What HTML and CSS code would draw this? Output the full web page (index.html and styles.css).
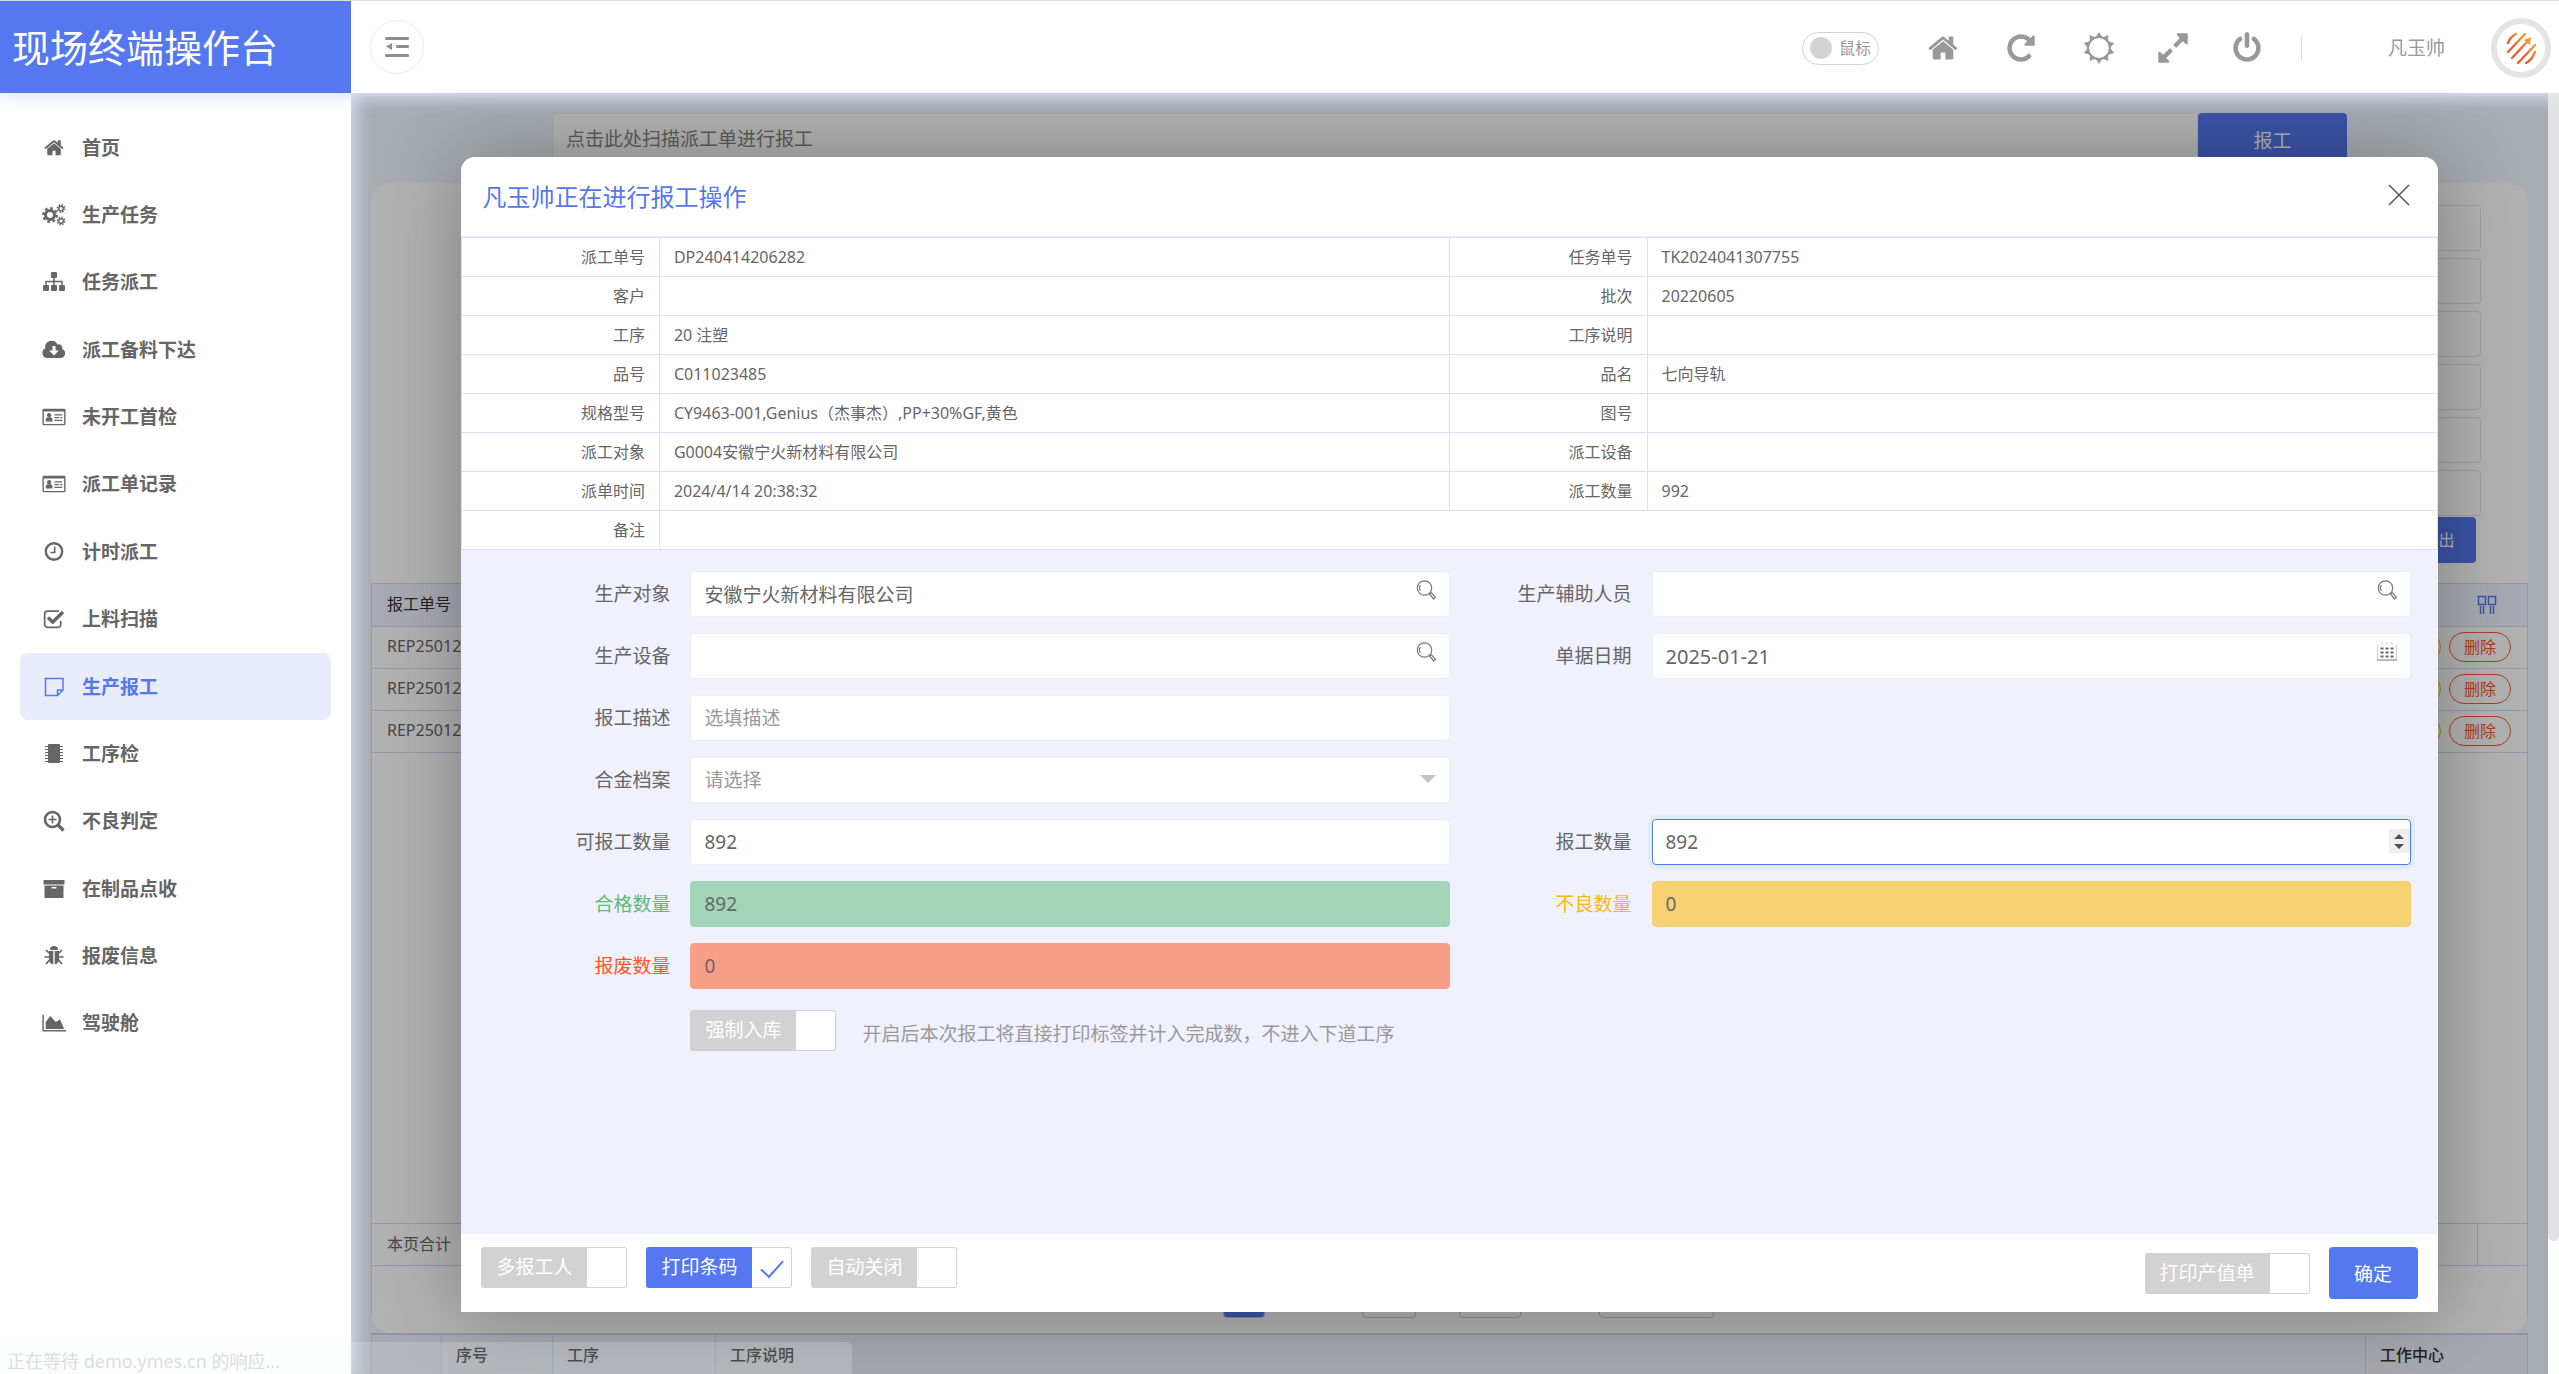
FILE: index.html
```html
<!DOCTYPE html>
<html lang="zh-CN">
<head>
<meta charset="utf-8">
<title>现场终端操作台</title>
<link rel="stylesheet" href="styles.css">
</head>
<body>
<div class="app">
  <header class="topbar">
    <h1 class="brand">现场终端操作台</h1>
    <button class="fold" type="button" aria-label="折叠菜单">
      <svg width="24" height="22" viewBox="0 0 24 22" fill="#8f8f8f"><rect x="0" y="1" width="24" height="3" rx="1"/><rect x="11" y="9" width="13" height="3" rx="1"/><rect x="0" y="18" width="24" height="3" rx="1"/><path d="M1 10.500 7 7v7z"/></svg>
    </button>
    <div class="tools">
      <button class="mouse" type="button"><i></i>鼠标</button>
      <a class="tool wide" href="#" aria-label="首页"><svg viewBox="0 0 1792 1792"><path d="M1472 992v480q0 26-19 45t-45 19h-384v-384h-256v384h-384q-26 0-45-19t-19-45v-480q0-1 .5-3t.5-3l575-474 575 474q1 2 1 6zm223-69l-62 74q-8 9-21 11h-3q-13 0-21-7l-692-577-692 577q-12 8-24 7-13-2-21-11l-62-74q-8-10-7-23.500t11-21.500l719-599q32-26 76-26t76 26l244 204v-195q0-14 9-23t23-9h192q14 0 23 9t9 23v408l219 182q10 8 11 21.500t-7 23.500z"/></svg></a>
      <a class="tool wide" href="#" aria-label="刷新"><svg viewBox="0 0 1792 1792"><path d="M1664 256v448q0 26-19 45t-45 19h-448q-42 0-59-40-17-39 14-69l138-138q-148-137-349-137-104 0-198.500 40.500t-163.500 109.500-109.500 163.500-40.500 198.500 40.500 198.500 109.500 163.500 163.500 109.500 198.500 40.500q119 0 225-52t179-147q7-10 23-12 15 0 25 9l137 138q9 8 9.500 20.500t-7.500 22.500q-109 132-264 204.500t-327 72.500q-156 0-298-61t-245-164-164-245-61-298 61-298 164-245 245-164 298-61q147 0 284.500 55.500t244.500 156.500l130-129q29-31 70-14 39 17 39 59z"/></svg></a>
      <a class="tool" href="#" aria-label="主题"><svg viewBox="0 0 32 32"><circle cx="16" cy="16" r="11" fill="none" stroke="#999" stroke-width="2"/><g id="rays"><path id="ray" d="M16 0l3.800 6h-7.600z"/><use href="#ray" transform="rotate(36 16 16)"/><use href="#ray" transform="rotate(72 16 16)"/><use href="#ray" transform="rotate(108 16 16)"/><use href="#ray" transform="rotate(144 16 16)"/></g><use href="#rays" transform="rotate(180 16 16)"/></svg></a>
      <a class="tool" href="#" aria-label="全屏"><svg viewBox="64 64 1664 1664"><path d="M883 1056q0 13-10 23l-332 332 144 144q19 19 19 45t-19 45-45 19h-448q-26 0-45-19t-19-45v-448q0-26 19-45t45-19 45 19l144 144 332-332q10-10 23-10t23 10l114 114q10 10 10 23zm781-864v448q0 26-19 45t-45 19-45-19l-144-144-332 332q-10 10-23 10t-23-10l-114-114q-10-10-10-23t10-23l332-332-144-144q-19-19-19-45t19-45 45-19h448q26 0 45 19t19 45z"/></svg></a>
      <a class="tool" href="#" aria-label="退出"><svg viewBox="0 0 1792 1792"><path d="M1664 896q0 156-61 298t-164 245-245 164-298 61-298-61-245-164-164-245-61-298q0-182 80.500-343t226.500-270q43-32 95.500-25t83.500 50q32 42 24.500 94.500t-49.500 84.500q-98 74-151.500 181t-53.500 228q0 104 40.500 198.500t109.500 163.500 163.500 109.500 198.500 40.500 198.500-40.500 163.500-109.500 109.500-163.500 40.500-198.500q0-121-53.500-228t-151.500-181q-42-32-49.500-84.500t24.500-94.500q31-43 84-50t95 25q146 109 226.500 270t80.500 343zm-640-768v640q0 52-38 90t-90 38-90-38-38-90v-640q0-52 38-90t90-38 90 38 38 90z"/></svg></a>
      <span class="rule"></span>
      <span class="user">凡玉帅</span>
      <span class="avatar">
        <svg width="30" height="32" viewBox="0 0 30 32" fill="none" stroke-width="2.400" stroke-linecap="round"><defs><linearGradient id="og" gradientUnits="userSpaceOnUse" x1="6" y1="22" x2="20" y2="8"><stop offset=".35" stop-color="#f25a33"/><stop offset="1" stop-color="#f0982f"/></linearGradient></defs><g stroke="url(#og)"><path d="M2 11Q4 5 10 2M2 20 19 2M6 26 22 9M12 31 29 13M20 31Q26 28 29 20"/></g><path d="M18 8 25 5 24 13z" fill="#f0982f"/></svg>
      </span>
    </div>
  </header>

  <nav class="side">
    <div class="menu">
    <a href="#"><svg viewBox="-128 -100 2048 2048"><path d="M1472 992v480q0 26-19 45t-45 19h-384v-384h-256v384h-384q-26 0-45-19t-19-45v-480q0-1 .5-3t.5-3l575-474 575 474q1 2 1 6zm223-69l-62 74q-8 9-21 11h-3q-13 0-21-7l-692-577-692 577q-12 8-24 7-13-2-21-11l-62-74q-8-10-7-23.500t11-21.500l719-599q32-26 76-26t76 26l244 204v-195q0-14 9-23t23-9h192q14 0 23 9t9 23v408l219 182q10 8 11 21.500t-7 23.500z"/></svg>首页</a>
    <a href="#"><svg viewBox="0 0 24 24" fill="none" stroke="currentColor"><circle cx="8" cy="12" r="4.500" stroke-width="3"/><circle cx="8" cy="12" r="6.800" stroke-width="2.400" stroke-dasharray="2.700 2.640"/><circle cx="19" cy="5.500" r="2.300" stroke-width="1.400"/><circle cx="19" cy="5.500" r="3.600" stroke-width="1.600" stroke-dasharray="1.410 1.410"/><circle cx="19" cy="18" r="2.300" stroke-width="1.400"/><circle cx="19" cy="18" r="3.600" stroke-width="1.600" stroke-dasharray="1.410 1.410"/></svg>生产任务</a>
    <a href="#"><svg viewBox="0 0 24 24"><rect x="9" y="2" width="6" height="6" rx="1"/><rect x="1" y="15" width="6" height="6" rx="1"/><rect x="9" y="15" width="6" height="6" rx="1"/><rect x="17" y="15" width="6" height="6" rx="1"/><path d="M4 15v-3.500h16V15M12 8v7" fill="none" stroke="currentColor" stroke-width="1.500"/></svg>任务派工</a>
    <a href="#"><svg viewBox="0 0 24 24"><path fill-rule="evenodd" d="M5.500 20a5.200 5.200 0 0 1-2.300-9.800A6.500 6.500 0 0 1 15.500 6.500a3.600 3.600 0 0 1 4.700 4.500A4.700 4.700 0 0 1 19 20zM10.500 8v4.500H7.200L12 17.500l4.800-5h-3.300V8z"/></svg>派工备料下达</a>
    <a href="#"><svg viewBox="0 0 26 24"><g id="idcard"><path fill-rule="evenodd" d="M2 3h22a1.500 1.500 0 0 1 1.500 1.500v15A1.500 1.500 0 0 1 24 21H2a1.500 1.500 0 0 1-1.500-1.500v-15A1.500 1.500 0 0 1 2 3zM2 6v13.500h22V6z"/><circle cx="7.700" cy="10" r="2.300"/><path d="M4 17v-2.200q.4-2.600 2.200-2.600h3q1.800 0 2.200 2.600V17z"/><path d="M13.500 9h8.500v1.400h-8.500zM13.500 12h5v1.400h-5zM19.800 12h2.200v1.400h-2.200zM13.500 15h8.500v1.400h-8.500z"/></g></svg>未开工首检</a>
    <a href="#"><svg viewBox="0 0 26 24"><use href="#idcard"/></svg>派工单记录</a>
    <a href="#"><svg viewBox="0 0 24 24" fill="none" stroke="currentColor"><circle cx="12" cy="11.500" r="8.200" stroke-width="2.400"/><path d="M12.700 6.500v6H8.500" stroke-width="1.600"/></svg>计时派工</a>
    <a href="#"><svg viewBox="0 0 24 24" fill="none" stroke="currentColor"><path d="M17 4.200H5.500A3 3 0 0 0 2.700 7v10.500a3 3 0 0 0 2.800 2.800H16a3 3 0 0 0 2.800-2.800V14" stroke-width="1.700"/><path d="M6 10.500l4.700 4.700L21 5" stroke-width="3.400"/></svg>上料扫描</a>
    <a href="#" class="on"><svg viewBox="0 0 24 24" fill="none" stroke="currentColor" stroke-width="1.500"><path d="M3.500 3.500h17.500V15l-5.500 5.500h-12zM20.500 15h-5v5"/></svg>生产报工</a>
    <a href="#"><svg viewBox="0 0 24 24"><rect x="6" y="2" width="12" height="19" rx="1"/><path d="M4.500 4v16M19.500 4v16" fill="none" stroke="currentColor" stroke-width="3" stroke-dasharray="1 2"/></svg>工序检</a>
    <a href="#"><svg viewBox="0 0 24 24" fill="none" stroke="currentColor"><circle cx="10.500" cy="10.500" r="7.500" stroke-width="2.600"/><path d="M16 16l5.500 5.500" stroke-width="3.200"/><path d="M6.500 10.500h8M10.500 6.500v8" stroke-width="1.700"/></svg>不良判定</a>
    <a href="#"><svg viewBox="0 0 24 24"><path fill-rule="evenodd" d="M1.500 3h21v4.500h-21zM2.500 8.500h19V21h-19zM9.500 10v1.500h5V10z"/></svg>在制品点收</a>
    <a href="#"><svg viewBox="0 0 24 24"><path d="M8 6a4 4 0 0 1 8 0zM7 7h4.300v13.500Q7 19.500 7 15zM12.700 7H17v8q0 4.500-4.300 5.500z"/><path d="M7 9 4 6M17 9l3-3M7 13H2.500M17 13h4.500M7.500 16 4 20M16.500 16l3.500 4" fill="none" stroke="currentColor" stroke-width="1.700"/></svg>报废信息</a>
    <a href="#"><svg viewBox="0 0 26 24"><path d="M1.200 3v17.300H26" fill="none" stroke="currentColor" stroke-width="1.600"/><path d="M4 18.500V11l5-6.500 6 6.500 4.500-3 4.500 10.500z"/></svg>驾驶舱</a>
    </div>
  </nav>

  <main class="content">
    <div class="page">
      <div class="scan">
        <input type="text" placeholder="点击此处扫描派工单进行报工" aria-label="扫描派工单">
        <button type="button">报工</button>
      </div>
      <section class="card">
        <div class="filters">
          <input type="text" aria-label="条件一"><input type="text" aria-label="条件二"><input type="text" aria-label="条件三"><input type="text" aria-label="条件四"><input type="text" aria-label="条件五"><input type="text" aria-label="条件六">
          <button type="button">导出</button>
        </div>
        <div class="list">
          <table class="records">
            <thead><tr><th>报工单号</th><th class="ops"><svg width="20" height="20" viewBox="0 0 20 20" fill="none" stroke="#5578f0" stroke-width="1.500"><path d="M1.500 1.500h7v8h-7zM11.500 1.500h7v8h-7zM3.500 11v8M6.500 11v8M13.500 11v8M16.500 11v8"/></svg></th></tr></thead>
            <tbody>
              <tr><td>REP25012</td><td class="acts"><button class="warn" type="button"></button><button class="del" type="button">删除</button></td></tr>
              <tr><td>REP25012</td><td class="acts"><button class="warn" type="button"></button><button class="del" type="button">删除</button></td></tr>
              <tr><td>REP25012</td><td class="acts"><button class="warn" type="button"></button><button class="del" type="button">删除</button></td></tr>
            </tbody>
          </table>
          <div class="total"><span>本页合计</span><span class="last"></span></div>
          <div class="pager"><i class="cur"></i><i class="go"></i><i class="sure"></i><i class="size"></i></div>
        </div>
      </section>
      <table class="steps">
        <tr><th class="c1"></th><th class="c2">序号</th><th class="c3">工序</th><th>工序说明</th><th class="c5">工作中心</th></tr>
      </table>
    </div>
    <div class="mask"></div>
    <div class="rail"><i></i></div>

    <section class="dialog" role="dialog" aria-labelledby="dlg-title">
      <header class="dlg-head">
        <h2 id="dlg-title">凡玉帅正在进行报工操作</h2>
        <button type="button" aria-label="关闭"><svg width="22" height="22" viewBox="0 0 22 22" stroke="#555" stroke-width="1.500"><path d="M1 1l20 20M21 1 1 21"/></svg></button>
      </header>
      <table class="info">
        <tr><th>派工单号</th><td>DP240414206282</td><th>任务单号</th><td>TK2024041307755</td></tr>
        <tr><th>客户</th><td></td><th>批次</th><td>20220605</td></tr>
        <tr><th>工序</th><td>20 注塑</td><th>工序说明</th><td></td></tr>
        <tr><th>品号</th><td>C011023485</td><th>品名</th><td>七向导轨</td></tr>
        <tr><th>规格型号</th><td>CY9463-001,Genius（杰事杰）,PP+30%GF,黄色</td><th>图号</th><td></td></tr>
        <tr><th>派工对象</th><td>G0004安徽宁火新材料有限公司</td><th>派工设备</th><td></td></tr>
        <tr><th>派单时间</th><td>2024/4/14 20:38:32</td><th>派工数量</th><td>992</td></tr>
        <tr><th>备注</th><td colspan="3"></td></tr>
      </table>
      <form class="form">
        <div class="field first"><label for="f1">生产对象</label><div class="box"><input id="f1" type="text" value="安徽宁火新材料有限公司"><svg class="ico" width="20" height="20" viewBox="0 0 20 20"><g id="lens" fill="none" stroke="#777" stroke-width="1.200"><circle cx="8.500" cy="8" r="7.200"/><path d="M4.500 11a5 5 0 0 1 0-6"/><path d="M13.500 14l1.800-1.400 4 4.800-1.600 1.600z"/></g></svg></div></div>
        <div class="field"><label for="f2">生产辅助人员</label><div class="box"><input id="f2" type="text"><svg class="ico" width="20" height="20" viewBox="0 0 20 20"><use href="#lens"/></svg></div></div>
        <div class="field first"><label for="f3">生产设备</label><div class="box"><input id="f3" type="text"><svg class="ico" width="20" height="20" viewBox="0 0 20 20"><use href="#lens"/></svg></div></div>
        <div class="field"><label for="f4">单据日期</label><div class="box"><input id="f4" class="date" type="text" value="2025-01-21"><svg class="ico" width="20" height="20" viewBox="0 0 20 20"><path d="M.5 2.500v15.500h19V2.500M5 0v3M10 0v3M15 0v3" fill="none" stroke="#ccc"/><path d="M0 18h20" stroke="#aaa" stroke-width="1.500"/><path d="M3.500 6.500h13M3.500 10.500h13M3.500 14.500h13" stroke="#666" stroke-width="2" stroke-dasharray="3 2"/></svg></div></div>
        <div class="field first"><label for="f5">报工描述</label><div class="box"><input id="f5" type="text" placeholder="选填描述"></div></div>
        <div class="field first"><label for="f6">合金档案</label><div class="box"><select id="f6"><option>请选择</option></select><i class="caret"></i></div></div>
        <div class="field first"><label for="f7">可报工数量</label><div class="box"><input id="f7" type="text" value="892"></div></div>
        <div class="field"><label for="f8">报工数量</label><div class="box"><input id="f8" class="focus" type="number" value="892"><span class="spin"><i class="up"></i><i class="down"></i></span></div></div>
        <div class="field first ok"><label for="f9">合格数量</label><div class="box"><input id="f9" type="text" value="892"></div></div>
        <div class="field bad"><label for="f10">不良数量</label><div class="box"><input id="f10" type="text" value="0"></div></div>
        <div class="field first scrap"><label for="f11">报废数量</label><div class="box"><input id="f11" type="text" value="0"></div></div>
        <div class="force"><label class="switch"><span>强制入库</span><input type="checkbox"></label><span class="hint">开启后本次报工将直接打印标签并计入完成数，不进入下道工序</span></div>
      </form>
      <footer class="dlg-foot">
        <label class="switch"><span>多报工人</span><input type="checkbox"></label>
        <label class="switch"><span>打印条码</span><input type="checkbox" checked></label>
        <label class="switch"><span>自动关闭</span><input type="checkbox"></label>
        <div class="foot-end">
          <label class="switch"><span>打印产值单</span><input type="checkbox"></label>
          <button type="button">确定</button>
        </div>
      </footer>
    </section>
  </main>
  <div class="status">正在等待 demo.ymes.cn 的响应...</div>
</div>
</body>
</html>
```
FILE: styles.css
```css
* { box-sizing: border-box; }
body {
  margin: 0;
  font: 19px/28px "Noto Sans", "Noto Sans CJK SC", sans-serif;
  color: #666;
}
button, input, select { font: inherit; color: inherit; margin: 0; }
button { padding: 0; border: 0; background: none; }
a { color: inherit; text-decoration: none; }
svg { display: block; }
input, select { outline: 0; }

.app {
  height: 100vh;
  display: grid;
  grid-template: 93px minmax(0, 1fr) / 351px minmax(0, 1fr);
  overflow: hidden;
}

/* top bar */
.topbar {
  grid-column: 1 / 3;
  display: flex;
  align-items: center;
  background: #fff;
  border-top: 1px solid #dcdde2;
  box-shadow: 0 2px 16px 2px #e0e6fa;
  z-index: 3;
}
.brand {
  width: 351px;
  height: 92px;
  margin: 0;
  padding-left: 12px;
  background: #5578f0;
  color: #fff;
  font-size: 38px;
  font-weight: 400;
  line-height: 92px;
}
.fold {
  display: grid;
  place-items: center;
  width: 54px;
  height: 54px;
  margin-left: 19px;
  border: 1px solid #eceef8;
  border-radius: 50%;
}
.tools {
  display: flex;
  align-items: center;
  margin-left: auto;
  padding: 2px 8px 0 0;
  color: #999;
}
.mouse {
  display: flex;
  align-items: center;
  gap: 7px;
  width: 77px;
  height: 33px;
  margin-right: 48px;
  padding-left: 7px;
  border: 1px solid #d2d2d2;
  border-radius: 17px;
  background: #fff;
  font-size: 16px;
}
.mouse i { width: 22px; height: 22px; border-radius: 50%; background: #d2d2d2; }
.tool { width: 32px; margin-right: 42px; fill: #999; }
.tool.wide { margin-right: 46px; }
.rule { width: 1px; height: 27px; background: #ddd; margin-left: -4px; }
.user { margin: 0 46px 0 86px; }
.avatar {
  display: grid;
  place-items: center;
  width: 60px;
  height: 60px;
  border: 6px solid #e4e4e4;
  border-radius: 50%;
}

/* side menu */
.side {
  padding: 21px 20px 0;
  background: #fff;
  box-shadow: 0 0 18px 3px #e0e6fa;
  font-weight: 700;
  z-index: 2;
}
.menu { display: grid; grid-auto-rows: 1fr; height: 943px; }
.menu a {
  display: flex;
  align-items: center;
  gap: 16px;
  padding-left: 22px;
  border-radius: 8px;
  fill: currentColor;
}
.menu svg { width: 24px; height: 24px; }
.menu .on { background: #e8ecfb; color: #5578f0; }

/* page behind the dialog */
.content { position: relative; overflow: hidden; background: #f0f5ff; }
.page {
  display: flex;
  flex-direction: column;
  height: 100%;
  margin-right: 11px;
  padding: 20px 20px 0;
}
.scan { display: flex; height: 56px; margin: 0 181px 14px; }
.scan input {
  flex: 1;
  padding: 0 13px 4px;
  border: 1px solid #eee;
  border-radius: 4px 0 0 4px;
  background: #fff;
}
.scan input::placeholder { color: #858585; }
.scan button { width: 149px; border-radius: 4px; background: #5578f0; color: #fff; }
.card {
  flex: 1;
  display: flex;
  flex-direction: column;
  min-height: 0;
  border-radius: 20px;
  background: #fff;
  overflow: hidden;
}
.filters {
  display: flex;
  flex-direction: column;
  align-items: flex-end;
  gap: 7px;
  height: 400px;
  padding: 22px 47px 0;
}
.filters input { width: 400px; height: 46px; border: 1px solid #e6e6e6; border-radius: 4px; flex: none; }
.filters button {
  width: 75px;
  height: 46px;
  flex: none;
  margin: -6px 5px 0 0;
  border-radius: 4px;
  background: #5578f0;
  color: #fff;
  font-size: 16px;
}
.list {
  flex: 1;
  display: flex;
  flex-direction: column;
  border: 1px solid #d3daf5;
  border-width: 1px 1px 0;
  font-size: 16px;
}
.records, .steps { width: 100%; border-collapse: collapse; table-layout: fixed; font-size: 16px; line-height: 24px; }
.records th, .records td { height: 42px; padding: 0 15px 2px; text-align: left; font-weight: 400; border-bottom: 1px solid #d3daf5; }
.records th { background: #f0f4ff; color: #333; font-weight: 400; }
.records .ops { padding: 0 30px; }
.ops svg { margin-left: auto; }
.records .acts { padding: 0 16px; text-align: right; font-size: 0; }
.acts button { height: 30px; width: 62px; margin-left: 8px; border: 1px solid #ffb800; border-radius: 15px; font-size: 16px; line-height: 26px; vertical-align: middle; }
.acts .del { border-color: #ff5722; color: #ff5722; }
.total {
  display: flex;
  justify-content: space-between;
  height: 43px;
  margin-top: auto;
  padding-left: 15px;
  border: 1px solid #d3daf5;
  border-width: 1px 0;
  line-height: 41px;
}
.total .last { width: 50px; border-left: 1px solid #d3daf5; }
.pager { display: flex; justify-content: center; height: 67px; padding: 14px 0 0 38px; }
.pager i { height: 38px; border: 1px solid #c4c9dc; border-radius: 4px; }
.pager .cur { width: 42px; margin-right: 97px; background: #5578f0; }
.pager .go { width: 54px; margin-right: 43px; }
.pager .sure { width: 62px; margin-right: 78px; }
.pager .size { width: 115px; }
.steps { height: 41px; background: #f0f2fc; border-top: 2px solid #ccd3f0; }
.steps th { padding: 0 14px; text-align: left; border: 1px solid #d3daf5; border-width: 0 1px; color: #333; font-weight: 500; }
.steps .c1 { width: 70px; }
.steps .c2 { width: 111px; }
.steps .c3 { width: 163px; }
.steps .c5 { width: 162px; }
.mask { position: absolute; inset: 0 11px 0 0; background: rgba(0, 0, 0, .3); }
.rail { position: absolute; inset: 0 0 0 auto; width: 11px; background: #fff; z-index: 1; }
.rail i { display: block; height: 1148px; border-radius: 0 0 6px 6px; background: #e2e2e2; }

/* dialog */
.dialog {
  position: absolute;
  inset: 64px calc(5% + 11px) 62px 5%;
  display: flex;
  flex-direction: column;
  border-radius: 14px 14px 0 0;
  background: #fff;
  box-shadow: 1px 1px 80px rgba(0, 0, 0, .3);
}
.dlg-head {
  display: flex;
  align-items: center;
  justify-content: space-between;
  height: 80px;
  padding: 0 28px 0 21px;
  border-bottom: 1px solid #f0f0f0;
}
.dlg-head h2 { margin: 0; font-size: 24px; line-height: 36px; font-weight: 400; color: #5578f0; }
.dlg-head button { margin-bottom: 4px; }
.info { width: 100%; table-layout: fixed; border-collapse: collapse; font-size: 16px; line-height: 24px; }
.info th, .info td { height: 39px; padding: 0 14px 1px; border: 1px solid #d9e1fa; text-align: left; }
.info th { width: 10%; text-align: right; font-weight: 400; }
.form {
  flex: 1;
  display: grid;
  grid-template-columns: 1fr 1fr;
  align-content: start;
  row-gap: 16px;
  padding: 21px 27px 0;
  background: #eff1fd;
}
.field { display: flex; align-items: center; }
.first { grid-column: 1; }
.field label { width: 182px; margin-right: 20px; text-align: right; }
.box { position: relative; flex: 1; height: 46px; }
.box input, .box select {
  display: block;
  width: 100%;
  height: 46px;
  padding: 0 13px;
  border: 1px solid #eee;
  border-radius: 4px;
  background: #fff;
  appearance: none;
}
.box input[type="number"] { appearance: textfield; }
.box input::placeholder { color: #999; }
.box select { color: #999; }
.box .date { font-size: 20px; }
.box .focus { border-color: #5578f0; box-shadow: 0 0 0 4px #e0edf6; }
.ico { position: absolute; right: 14px; top: 9px; }
.caret {
  position: absolute;
  right: 14px;
  top: 18px;
  border: 8px solid transparent;
  border-top-color: #c2c2c2;
  border-bottom: 0;
}
.spin {
  position: absolute;
  right: 1px;
  top: 10px;
  display: grid;
  place-content: center;
  gap: 5px;
  width: 21px;
  height: 24px;
  background: #efefef;
}
.spin i { border: 5px solid transparent; }
.spin .up { border-top: 0; border-bottom-color: #505050; }
.spin .down { border-bottom: 0; border-top-color: #505050; }
.ok label { color: #5fb878; }
.ok input { background: #a2d4b7; border-color: #a2d4b7; }
.bad label { color: #ffb800; }
.bad input { background: #f7d273; border-color: #f7d273; }
.scrap label { color: #ff5722; }
.scrap input { background: #f8a087; border-color: #f8a087; }
.force { grid-column: 1 / 3; display: flex; align-items: center; gap: 26px; margin: 5px 0 0 202px; }
.hint { color: #999; padding-top: 6px; }

.switch { display: flex; height: 41px; }
.switch span {
  padding: 0 15px;
  border-radius: 3px 0 0 3px;
  background: #d2d2d2;
  color: #fff;
  line-height: 40px;
}
.switch input {
  position: relative;
  width: 40px;
  height: 41px;
  border: 1px solid #d2d2d2;
  border-left: 0;
  border-radius: 0 3px 3px 0;
  background: #fff;
  appearance: none;
}
.switch:has(input:checked) span { background: #5578f0; }
.switch input:checked::after {
  content: "";
  position: absolute;
  left: 14px;
  top: 7px;
  width: 10px;
  height: 20px;
  border: solid #5578f0;
  border-width: 0 2px 2px 0;
  transform: rotate(42deg);
}
.dlg-foot { display: flex; gap: 19px; height: 78px; padding: 13px 20px; }
.foot-end { display: flex; align-items: center; gap: 19px; margin-left: auto; }
.foot-end button { width: 89px; height: 52px; padding-top: 2px; border-radius: 4px; background: #5578f0; color: #fff; }

/* browser status bubble */
.status {
  position: absolute;
  left: 0;
  bottom: 0;
  z-index: 4;
  width: 852px;
  height: 32px;
  padding: 5px 7px 0;
  border-radius: 0 6px 0 0;
  background: rgba(240, 248, 244, .2);
  color: #ddd;
  font-size: 18px;
  line-height: 28px;
}
```
